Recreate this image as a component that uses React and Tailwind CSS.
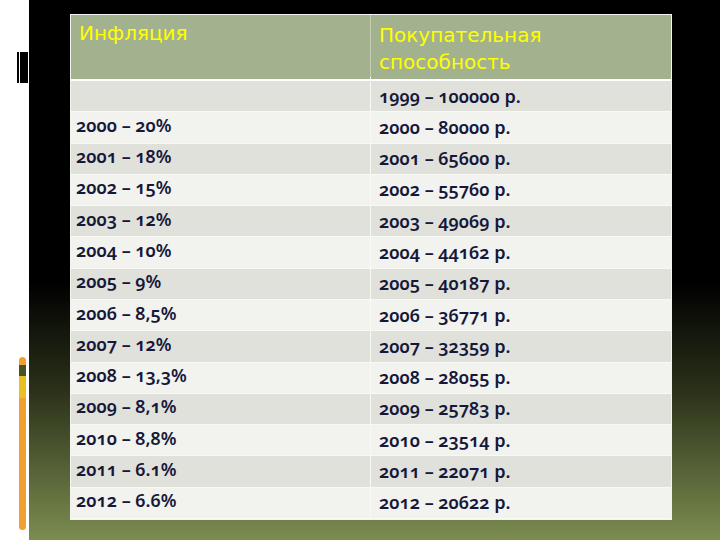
import React from 'react';

const rows = [
  ['', '1999 – 100000 р.'],
  ['2000 – 20%', '2000 – 80000 р.'],
  ['2001 – 18%', '2001 – 65600 р.'],
  ['2002 – 15%', '2002 – 55760 р.'],
  ['2003 – 12%', '2003 – 49069 р.'],
  ['2004 – 10%', '2004 – 44162 р.'],
  ['2005 – 9%', '2005 – 40187 р.'],
  ['2006 – 8,5%', '2006 – 36771 р.'],
  ['2007 – 12%', '2007 – 32359 р.'],
  ['2008 – 13,3%', '2008 – 28055 р.'],
  ['2009 – 8,1%', '2009 – 25783 р.'],
  ['2010 – 8,8%', '2010 – 23514 р.'],
  ['2011 – 6.1%', '2011 – 22071 р.'],
  ['2012 – 6.6%', '2012 – 20622 р.'],
];

const cellFont = { fontVariantNumeric: 'oldstyle-nums' };

function SideStrip() {
  return (
    <div className="w-[29px] h-full bg-white flex flex-col shrink-0">
      {/* black tab near the top */}
      <div className="mt-[52px] ml-[17px] w-[11px] h-[31px] bg-black flex">
        <div className="ml-[2px] w-[1px] h-full bg-white" />
      </div>
      {/* orange bar with dark and yellow segments */}
      <div className="mt-[274px] ml-[19px] w-[7px] h-[173px] bg-[#f0a030] rounded-sm flex flex-col">
        <div className="mt-[8px] h-[11px] bg-[#4a5028]" />
        <div className="h-[22px] bg-[#e8c020]" />
      </div>
    </div>
  );
}

export default function App() {
  return (
    <div className="w-[720px] h-[540px] flex overflow-hidden" style={{ fontFamily: '"Noto Sans", sans-serif' }}>
      <SideStrip />
      <div className="flex-1 h-full bg-[linear-gradient(to_bottom,#000_0%,#000_52%,#2a3019_72%,#7c8d51_100%)] pl-[41px] pt-[14px]">
        <div className="w-[602px] flex flex-col border border-[#f4f4ef]">
          <div className="h-[64px] bg-[#a3b28e] flex text-[#ffff00] text-[20px] leading-[27px]" style={{ fontFamily: '"DejaVu Sans", sans-serif' }}>
            <div className="w-[300px] pl-[8px] pt-[5px] border-r border-[#c4ccb4]">Инфляция</div>
            <div className="flex-1 pl-[8px] pt-[7px]">Покупательная<br />способность</div>
          </div>
          <div className="h-[2px] bg-white" />
          <div className="h-[438px] flex flex-col">
            {rows.map(([a, b], i) => (
              <div
                key={i}
                className={`flex-1 flex border-b border-[#f8f8f4] text-[18px] font-semibold text-[#16183a] ${i % 2 === 0 ? 'bg-[#e1e1db]' : 'bg-[#f2f2ee]'}`}
                style={cellFont}
              >
                <div className="w-[300px] pl-[5px] flex items-center -mt-[4px] border-r border-[#f8f8f4]">{a}</div>
                <div className="flex-1 pl-[8px] flex items-center">{b}</div>
              </div>
            ))}
          </div>
        </div>
      </div>
    </div>
  );
}
